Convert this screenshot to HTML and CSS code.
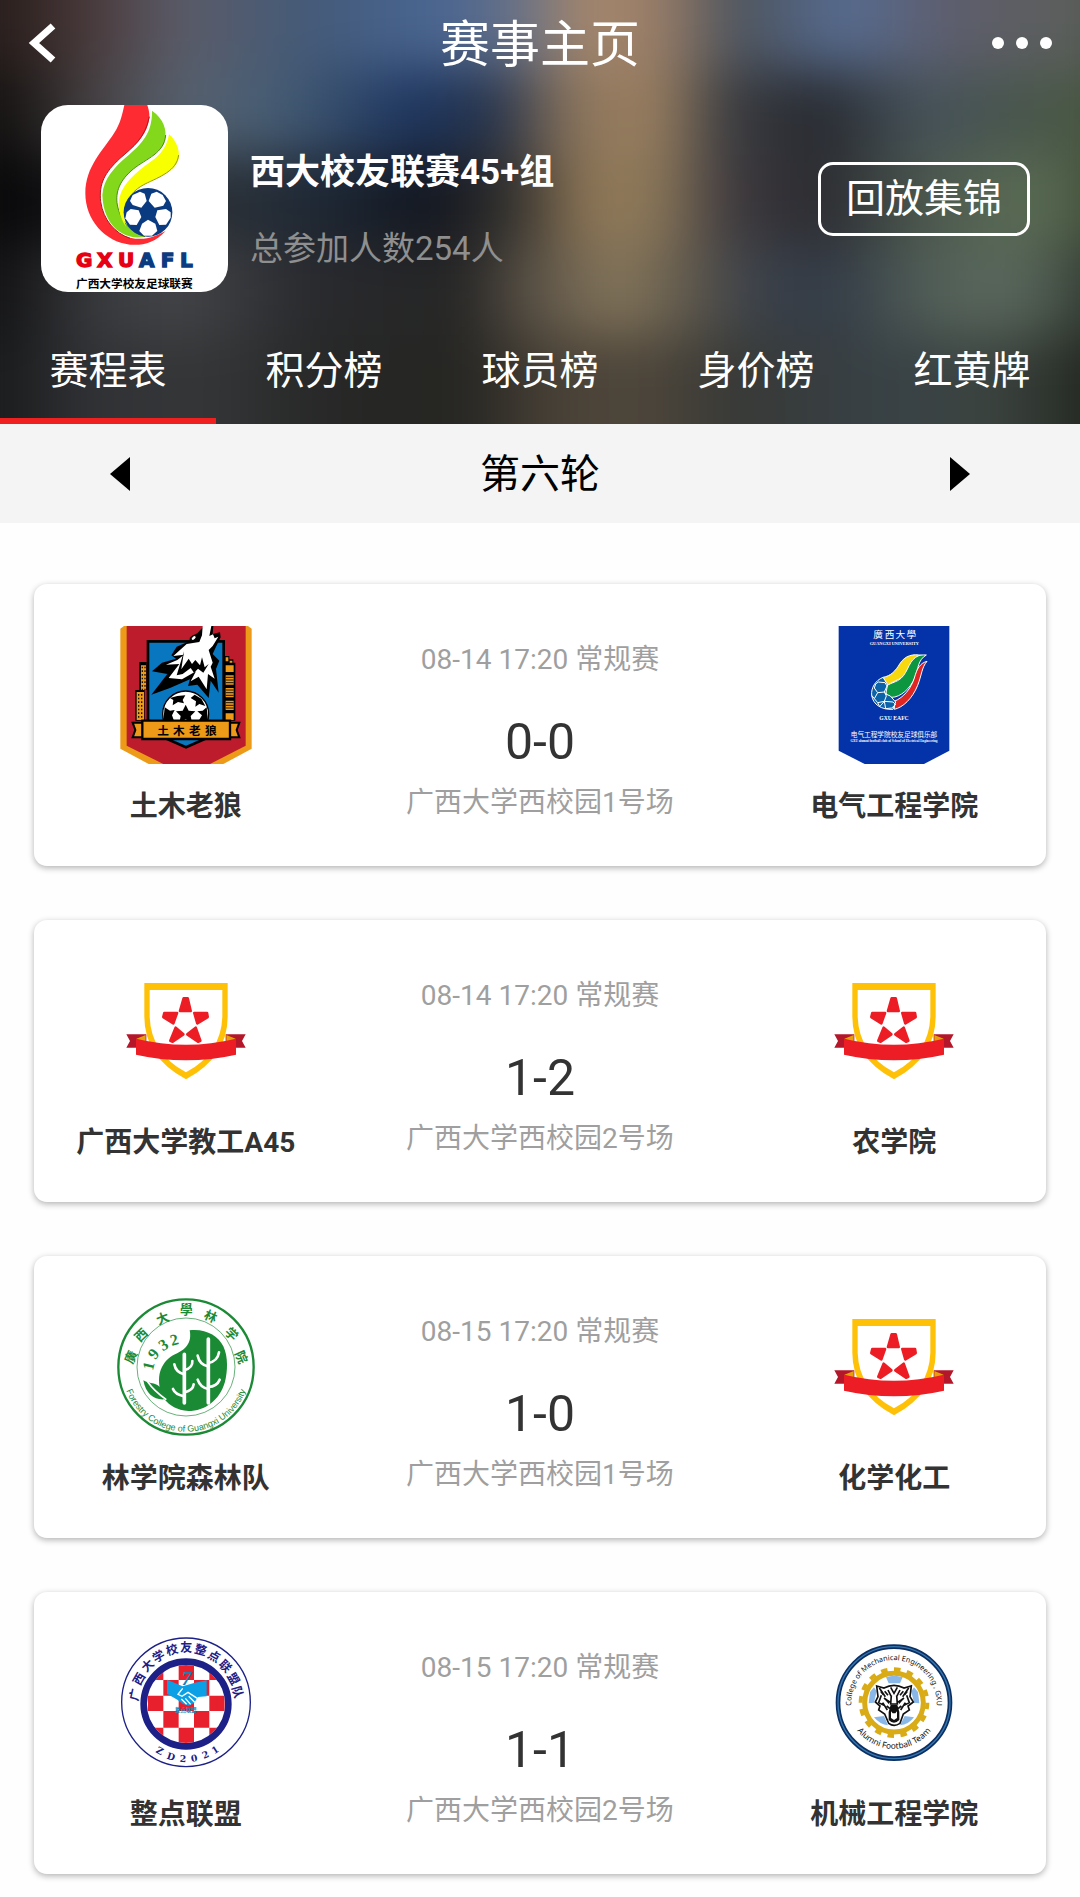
FILE: index.html
```html
<!DOCTYPE html>
<html lang="zh-CN">
<head>
<meta charset="utf-8">
<meta name="viewport" content="width=device-width, initial-scale=1">
<title>赛事主页</title>
<link rel="stylesheet" href="styles.css">
</head>
<body>
<svg class="defs" aria-hidden="true">
  <symbol id="default-crest" viewBox="24 6 414 414">
    <path fill="#b5172a" d="M52 223H112V263H52L63 243ZM410 223H350V263H410L399 243Z"/>
    <path fill="#ffc107" fill-rule="evenodd" d="M106 69H356V170Q356 290 231 358Q106 290 106 170ZM122 90V170Q126 280 231 337Q336 280 340 170V90Z"/>
    <path fill="#e3a008" d="M82 236L110 225V250ZM380 236L352 225V250Z"/>
    <path fill="#ec1d24" d="M81 236Q231 272 381 236V284Q231 318 81 284Z"/>
    <g fill="#ec1d24" stroke="#ec1d24" stroke-width="8" stroke-linejoin="round">
      <path d="M224 115H236L245 153H213Z"/>
      <path d="M256 159H294L296 171L265 190Z"/>
      <path d="M204 159H166L163 171L193 190Z"/>
      <path d="M260 203L274 242L267 245L235 223Z"/>
      <path d="M200 203L184 242L191 245L223 223Z"/>
    </g>
  </symbol>
</svg>

<header class="hero">
  <div class="hero-backdrop"></div>

  <div class="topbar">
    <button class="icon-button" type="button" aria-label="返回">
      <svg width="30" height="40" viewBox="0 0 30 40"><path d="M25 3L6 20L25 37" fill="none" stroke="#fff" stroke-width="7"/></svg>
    </button>
    <h1 class="page-title">赛事主页</h1>
    <button class="icon-button more" type="button" aria-label="更多">
      <svg width="60" height="12" viewBox="0 0 60 12" fill="#fff"><circle cx="6" cy="6" r="6"/><circle cx="30" cy="6" r="6"/><circle cx="54" cy="6" r="6"/></svg>
    </button>
  </div>

  <section class="event">
    <svg class="event-logo" viewBox="33 30 561 561" role="img" aria-label="GXUAFL">
      <rect x="33" y="30" width="561" height="561" fill="#fff"/>
      <path fill="#ff2b33" d="M283 30H352Q362 60 356 80C345 130 310 155 270 190C225 232 206 265 212 320C220 375 255 415 300 428C345 438 375 425 407 408C375 443 340 452 300 449C225 441 166 375 166 295C166 215 220 165 252 115C273 83 277 55 283 30Z"/>
      <path fill="none" stroke="#b3151d" stroke-width="3" d="M358 65C345 130 310 155 270 190C225 232 206 265 212 320C220 375 255 415 300 430"/>
      <path fill="#84d81c" d="M366 47C400 70 412 105 405 135C395 175 350 190 310 222C270 255 255 290 262 330C270 375 300 412 345 425C320 430 297 427 275 414C235 392 218 345 217 300C220 250 255 215 290 185C335 147 367 115 366 47Z"/>
      <path fill="none" stroke="#4b8c0c" stroke-width="3" d="M407 120C403 175 350 190 310 222C270 255 255 290 262 330C270 375 300 412 345 425"/>
      <path fill="#f7ff00" d="M417 118C442 140 451 170 445 195C435 228 390 245 345 267C310 285 290 310 284 345C282 365 283 380 288 395C268 365 262 335 269 305C280 265 320 230 360 202C395 178 412 150 417 118Z"/>
      <path fill="none" stroke="#999b00" stroke-width="3" d="M446 180C440 228 390 245 345 267C310 285 290 310 284 345"/>
      <circle cx="354" cy="352" r="73" fill="#0a3a80"/>
      <g fill="#fff">
        <path d="M308 300L330 290L344 296L350 318L334 338L308 330L300 318Z"/>
        <path d="M364 296L380 290L398 300L408 318L400 332L374 338L356 318Z"/>
        <path d="M290 352L302 342L326 346L334 366L320 390L300 389L286 370Z"/>
        <path d="M422 352L408 342L382 346L376 366L388 390L408 389L422 368Z"/>
        <path d="M336 386L354 374L376 386L382 408L366 422H342L328 408Z"/>
      </g>
      <g font-family="DejaVu Sans" font-weight="700" font-size="60" stroke-width="4" text-anchor="middle">
        <g fill="#e60012" stroke="#e60012"><text x="163" y="515">G</text><text x="224" y="515">X</text><text x="288" y="515">U</text></g>
        <g fill="#0a3a80" stroke="#0a3a80"><text x="350" y="515">A</text><text x="413" y="515">F</text><text x="469" y="515">L</text></g>
      </g>
      <text x="313" y="580" text-anchor="middle" font-family="Noto Sans CJK SC" font-weight="700" font-size="35">广西大学校友足球联赛</text>
    </svg>
    <div class="event-text">
      <h2 class="event-name">西大校友联赛45+组</h2>
      <p class="event-count">总参加人数254人</p>
    </div>
    <button class="replay" type="button">回放集锦</button>
  </section>

  <nav class="tabs">
    <a class="tab active" href="#schedule">赛程表</a>
    <a class="tab" href="#standings">积分榜</a>
    <a class="tab" href="#players">球员榜</a>
    <a class="tab" href="#values">身价榜</a>
    <a class="tab" href="#cards">红黄牌</a>
  </nav>
</header>

<section class="round">
  <button class="round-arrow" type="button" aria-label="上一轮"><svg width="20" height="34" viewBox="0 0 20 34"><path d="M20 0V34L0 17Z"/></svg></button>
  <h2 class="round-name">第六轮</h2>
  <button class="round-arrow" type="button" aria-label="下一轮"><svg width="20" height="34" viewBox="0 0 20 34"><path d="M0 0V34L20 17Z"/></svg></button>
</section>

<main class="matches" id="schedule">
  <article class="match">
    <div class="team">
      <svg class="crest" viewBox="21 36 414 414" role="img" aria-label="土木老狼">
        <path fill="#ec9a17" d="M31 44L42 36H414L425 44V404L340 450H116L31 404Z"/>
        <path fill="#bd1c2c" d="M50 36H407V395L300 450H160L50 395Z"/>
        <path d="M88 144H110V228H104V320H76V228H88ZM344 126H358V136H370V146H376V320H340V126Z"/>
        <path fill="#ec9a17" d="M93 154H108V228H93ZM80 234H102V318H80ZM347 130H355V142H347ZM359 140H367V146H359ZM347 154H371V174H347ZM347 184H371V212H347ZM347 222H371V250H347ZM347 260H371V288H347ZM347 298H371V318H347Z"/>
        <path fill="none" stroke="#1c1208" stroke-width="4" stroke-dasharray="5 6" d="M97 158V228M105 158V228M86 240V316M95 240V316"/>
        <path stroke="#1c1208" stroke-width="3" d="M347 190H371M347 198H371M347 206H371M347 228H371M347 236H371M347 244H371M347 266H371M347 274H371M347 282H371"/>
        <path fill="#0977bf" stroke="#000" stroke-width="8" d="M114 82H341V350L228 400L114 350Z"/>
        <path d="M238 82L240 70L262 58L282 36H310L308 60L330 55L332 70L318 98L308 120L328 140L318 165L326 236L302 200L296 252L262 212L234 216L240 196L180 222L124 242L172 180L126 172L156 146L198 134L184 124L200 98Z"/>
        <path fill="#fff" d="M278 36H304L298 66L309 61L314 73L325 68L308 96L296 108L308 146L302 158L314 194L294 180L290 226L266 188L242 202L258 172L216 196L176 192L208 150L168 152L202 138L222 122L190 126L230 90L268 84L276 64Z"/>
        <path d="M222 112L214 166L236 134L246 150L256 138L270 154L276 130L284 160L296 150L280 176L264 164L252 176L242 162L218 180L200 184Z"/>
        <ellipse cx="251" cy="72" rx="9" ry="6" fill="#fff" stroke="#000" stroke-width="4" transform="rotate(-40 251 72)"/>
        <circle cx="227" cy="300" r="69" stroke="#000" stroke-width="4" fill="#fff"/>
        <path d="M227 272L236 290L256 292L242 306L246 326L227 316L208 326L212 306L198 292L218 290ZM202 246L226 244L218 258L222 268L204 264L188 274L190 258L180 252ZM254 242L274 254L286 276L268 270L256 278L258 262L242 252ZM164 280L180 290L194 288L186 304L192 320H160ZM290 280L294 320H266L276 304L262 292L278 290Z"/>
        <path fill="#ec9a17" stroke="#000" stroke-width="6" d="M68 326H100V370H68L76 348ZM388 326H356V370H388L380 348Z"/>
        <path fill="#ec9a17" stroke="#000" stroke-width="7" d="M97 320H360V375H97Z"/>
        <text x="142" y="362" font-family="Noto Sans CJK SC" font-weight="700" font-size="35">土</text><text x="189" y="362" font-family="Noto Sans CJK SC" font-weight="700" font-size="35">木</text><text x="237" y="362" font-family="Noto Sans CJK SC" font-weight="700" font-size="35">老</text><text x="285" y="362" font-family="Noto Sans CJK SC" font-weight="700" font-size="35">狼</text>
      </svg>
      <p class="team-name">土木老狼</p>
    </div>
    <div class="info"><p class="meta">08-14 17:20 常规赛</p><p class="score">0-0</p><p class="meta venue">广西大学西校园1号场</p></div>
    <div class="team">
      <svg class="crest" viewBox="14 36 414 414" role="img" aria-label="电气工程学院">
        <path fill="#0433a9" d="M55 36H387V410L311 450H133L55 410Z"/>
        <g fill="#fff" text-anchor="middle">
          <g font-family="Noto Sans CJK SC" font-size="29"><text x="173" y="72">廣</text><text x="208" y="72">西</text><text x="240" y="72">大</text><text x="273" y="72">學</text></g>
          <text x="222" y="92" font-family="Liberation Serif" font-weight="700" font-size="13">GUANGXI UNIVERSITY</text>
          <text x="221" y="319" font-family="Liberation Serif" font-weight="700" font-size="17">GXU EAFC</text>
          <text x="221" y="368" font-family="Noto Sans CJK SC" font-size="20">电气工程学院校友足球俱乐部</text>
          <text x="221" y="384" font-family="Liberation Serif" font-weight="700" font-size="10">GXU alumni football club of School of Electrical Engineering</text>
        </g>
        <g stroke="#fff" stroke-width="3">
          <path fill="#f8d80e" d="M188 190C212 186 226 170 238 150C254 124 278 119 304 124C282 132 274 150 264 170C250 196 222 198 202 214Z"/>
          <path fill="#0d9640" d="M196 232C190 212 212 210 232 200C262 184 262 146 286 130C296 123 306 122 318 123C292 138 294 164 284 190C270 224 240 250 214 250C204 250 198 244 196 232Z"/>
          <path fill="#df2622" d="M222 262C250 250 272 224 282 192C290 164 298 148 320 142C304 160 304 184 292 214C276 254 248 280 222 286Z"/>
          <path fill="#0b62a8" d="M188 190C164 200 152 222 154 244C158 272 184 288 218 286L226 264L210 246L196 240L202 212Z"/>
          <path fill="none" d="M166 210L174 204L194 206L200 216L192 234L172 236L162 222ZM172 236L162 254L154 244M192 234L198 246L192 262L172 266L162 254M192 262L218 264M172 266L178 278L192 262M218 264L226 272L214 282L196 284L192 262"/>
        </g>
      </svg>
      <p class="team-name">电气工程学院</p>
    </div>
  </article>

  <article class="match">
    <div class="team"><svg class="crest" role="img" aria-label="广西大学教工A45"><use href="#default-crest"/></svg><p class="team-name">广西大学教工A45</p></div>
    <div class="info"><p class="meta">08-14 17:20 常规赛</p><p class="score">1-2</p><p class="meta venue">广西大学西校园2号场</p></div>
    <div class="team"><svg class="crest" role="img" aria-label="农学院"><use href="#default-crest"/></svg><p class="team-name">农学院</p></div>
  </article>

  <article class="match">
    <div class="team">
      <svg class="crest" viewBox="36 39 414 414" role="img" aria-label="林学院森林队">
        <defs><path id="forest-bottom" d="M53 276A192 192 0 0 0 433 276"/></defs>
        <circle cx="243" cy="246" r="203" fill="#fff" stroke="#1b8a35" stroke-width="7"/>
        <circle cx="243" cy="246" r="147" fill="none" stroke="#1b8a35" stroke-width="2"/>
        <path fill="#1b8a35" d="M254 136C300 130 340 152 355 184C370 216 368 260 360 290C345 345 300 378 250 378C215 376 195 362 178 343C150 346 122 328 115 286C138 300 168 290 168 322C152 270 170 228 210 208C240 195 262 175 254 136Z"/>
        <path fill="none" stroke="#fff" stroke-width="5" d="M128 290C145 315 162 328 184 344"/>
        <g fill="none" stroke="#fff" stroke-width="11" stroke-linecap="round">
          <path d="M238 208V354M310 162V354"/>
          <path stroke-width="8" d="M208 238Q212 262 238 268M262 228Q264 248 238 256M204 312Q210 328 238 334M266 298Q264 316 238 322M278 212Q284 240 310 244M342 202Q338 228 310 234M278 284Q286 308 310 312M344 284Q336 304 310 306"/>
        </g>
        <g fill="#1b8a35" text-anchor="middle">
          <g font-family="Liberation Serif" font-weight="700" font-size="48">
            <text transform="translate(146 246) rotate(-76)">1</text><text transform="translate(158 216) rotate(-52)">9</text><text transform="translate(184 193) rotate(-34)">3</text><text transform="translate(212 180) rotate(-15)">2</text>
          </g>
          <g font-family="Noto Sans CJK SC" font-weight="700" font-size="38">
            <text transform="translate(90 222) rotate(-66)">廣</text><text transform="translate(118 160) rotate(-44)">西</text><text transform="translate(178 113) rotate(-22)">大</text><text transform="translate(244 88)">學</text><text transform="translate(311 107) rotate(24)">林</text><text transform="translate(370 157) rotate(45)">学</text><text transform="translate(396 222) rotate(66)">院</text>
          </g>
          <text font-family="Liberation Sans" font-size="27"><textPath href="#forest-bottom" startOffset="50%">Forestry College of Guangxi University</textPath></text>
        </g>
      </svg>
      <p class="team-name">林学院森林队</p>
    </div>
    <div class="info"><p class="meta">08-15 17:20 常规赛</p><p class="score">1-0</p><p class="meta venue">广西大学西校园1号场</p></div>
    <div class="team"><svg class="crest" role="img" aria-label="化学化工"><use href="#default-crest"/></svg><p class="team-name">化学化工</p></div>
  </article>

  <article class="match">
    <div class="team">
      <svg class="crest" viewBox="21 27 414 414" role="img" aria-label="整点联盟">
        <defs>
          <clipPath id="zd-clip"><circle cx="228" cy="237" r="117"/></clipPath>
        </defs>
        <circle cx="228" cy="232" r="193" fill="#fff" stroke="#1c2087" stroke-width="4"/>
        <circle cx="228" cy="237" r="127" fill="#fff" stroke="#1c2087" stroke-width="20"/>
        <path clip-path="url(#zd-clip)" fill="#e8202e" d="M114 118H160V165H114ZM206 118H252V165H206ZM298 118H344V165H298ZM160 165H206V212H160ZM252 165H298V212H252ZM114 212H160V258H114ZM206 212H252V258H206ZM298 212H344V258H298ZM160 258H206V308H160ZM252 258H298V308H252ZM114 308H160V358H114ZM206 308H252V358H206ZM298 308H344V358H298Z"/>
        <path fill="#0ba0e6" d="M171 164L218 184L252 174L290 166V214L264 216L252 234L236 242L218 236L202 224L171 206Z"/>
        <path fill="none" stroke="#fff" stroke-width="4" d="M218 190L204 208L216 214L234 202L262 220M236 214L254 232M226 220L242 238M214 222L230 238"/>
        <text x="230" y="180" text-anchor="middle" font-family="Liberation Serif" font-style="italic" font-weight="700" font-size="58" fill="#187fbb">7</text>
        <text x="228" y="260" text-anchor="middle" font-family="Noto Sans CJK SC" font-weight="700" font-size="16" fill="#1687bd">整点联盟</text>
        <g fill="#1c2087" text-anchor="middle" font-family="Noto Sans CJK SC" font-weight="700" font-size="36">
          <text transform="translate(87 212) rotate(-77)">广</text><text transform="translate(98 168) rotate(-60)">西</text><text transform="translate(122 131) rotate(-44)">大</text><text transform="translate(152 105) rotate(-30)">学</text><text transform="translate(189 87) rotate(-15)">校</text><text transform="translate(229 80)">友</text><text transform="translate(269 87) rotate(15)">整</text><text transform="translate(306 105) rotate(30)">点</text><text transform="translate(337 133) rotate(45)">联</text><text transform="translate(359 168) rotate(60)">盟</text><text transform="translate(370 205) rotate(74)">队</text>
        </g>
        <g fill="#1c2087" text-anchor="middle" font-family="DejaVu Serif" font-weight="700" font-size="28">
          <text transform="translate(145 386) rotate(29)">Z</text><text transform="translate(180 404) rotate(17)">D</text><text transform="translate(218 411) rotate(4)">2</text><text transform="translate(254 409) rotate(-10)">0</text><text transform="translate(290 398) rotate(-23)">2</text><text transform="translate(321 383) rotate(-34)">1</text>
        </g>
      </svg>
      <p class="team-name">整点联盟</p>
    </div>
    <div class="info"><p class="meta">08-15 17:20 常规赛</p><p class="score">1-1</p><p class="meta venue">广西大学西校园2号场</p></div>
    <div class="team">
      <svg class="crest" viewBox="15 12 414 414" role="img" aria-label="机械工程学院">
        <defs>
          <path id="mech-top" d="M98 250A128 128 0 1 1 346 250"/>
          <path id="mech-bottom" d="M84 240A140 140 0 0 0 360 240"/>
        </defs>
        <circle cx="222" cy="218" r="168" fill="#fff" stroke="#0b2f63" stroke-width="14"/>
        <circle cx="222" cy="218" r="168" fill="none" stroke="#3777ae" stroke-width="4"/>
        <circle cx="222" cy="218" r="100" fill="none" stroke="#d9ab16" stroke-width="12" pathLength="320" stroke-dasharray="10 10"/>
        <circle cx="222" cy="218" r="88" fill="#fff" stroke="#d9ab16" stroke-width="15"/>
        <path fill="#89b8e8" d="M198 142Q222 132 248 142L240 160H206ZM150 186L162 172L170 184L162 218L146 220ZM294 186L282 172L274 184L282 218L298 220ZM162 262L192 258L204 286Q180 284 162 262ZM282 262L254 258L240 286Q266 284 282 262Z"/>
        <path fill="#fff" stroke="#111" stroke-width="5" d="M170 168L192 174Q222 158 252 174L274 168L270 200L280 216L264 228L268 240L250 252L240 280Q222 292 206 280L194 252L176 240L180 228L166 216L174 200Z"/>
        <path fill="none" stroke="#111" stroke-width="5" d="M178 174L196 200M266 174L248 200M212 172L222 190L232 172M204 180L214 200M240 180L230 200M184 196L176 218L192 226M260 196L268 218L252 226M192 204L208 216M252 204L236 216M188 218L202 240M256 218L242 240M214 196L212 222H232L230 196M200 228L210 236M244 228L234 236M194 184L204 196M250 184L240 196M182 184L190 194M262 184L254 194"/>
        <path fill="#111" d="M194 208L212 214L206 222ZM250 208L232 214L238 222ZM212 224H232L238 246V270Q222 286 206 270V246Z"/>
        <path fill="#fff" d="M213 244L218 250H226L231 244V264L222 270L213 264Z"/>
        <g font-family="Noto Sans" font-size="22" fill="#111" text-anchor="middle">
          <text><textPath href="#mech-top" startOffset="50%">College of Mechanical Engineering , GXU</textPath></text>
          <text font-size="25"><textPath href="#mech-bottom" startOffset="50%">Alumni Football Team</textPath></text>
        </g>
      </svg>
      <p class="team-name">机械工程学院</p>
    </div>
  </article>
</main>
</body>
</html>
```

FILE: styles.css
```css
* {
  box-sizing: border-box;
}

body {
  margin: 0;
  background: #fefefe;
  color: #333;
  font-family: Roboto, "Noto Sans CJK SC", sans-serif;
}

h1,
h2,
p {
  margin: 0;
  font-weight: 400;
}

button {
  padding: 0;
  border: 0;
  background: none;
  color: inherit;
  font: inherit;
}

svg {
  display: block;
}

.defs {
  position: absolute;
  width: 0;
  height: 0;
}

/* Header */

.hero {
  position: relative;
  overflow: hidden;
  isolation: isolate;
  background: #2b2c2e;
  color: #fff;
}

/* Five colour bands, blurred into one another */
.hero-backdrop {
  position: absolute;
  inset: -80px -40px;
  z-index: -1;
  background-image:
    linear-gradient(90deg, #231917 0%, #2e2321 5%, #49393a 11%, #5b5c68 19%, #445a78 30%, #486592 41%, #667086 48%, #a6876b 54%, #9a7e68 60%, #4c535c 67%, #566b90 76%, #5e5d6b 86%, #5a5f55 100%),
    linear-gradient(90deg, #0e0c0c 0%, #1a1716 5%, #443f40 11%, #57616e 19%, #465d74 27%, #1d355f 39%, #26334a 46%, #8c755c 53%, #9a7f60 60%, #3b3d42 66%, #272a30 74%, #46525a 83%, #4b5a3f 100%),
    linear-gradient(90deg, #050506 0%, #0a0a0c 5%, #151517 11%, #2b3138 22%, #1d2734 31%, #12161f 41%, #35332f 48%, #8f7757 54%, #8c7859 60%, #403c40 66%, #2a2a30 74%, #4b574d 83%, #5b6d55 92%, #414e38 100%),
    linear-gradient(90deg, #0e0e10 0%, #18181a 5%, #38393c 11%, #444548 19%, #292a2e 30%, #252525 43%, #60574a 50%, #85765b 57%, #5e574b 63%, #3c424a 68%, #333b47 75%, #536058 84%, #5a685d 91%, #2a3129 100%),
    linear-gradient(90deg, #161819 0%, #1d1f21 5%, #303235 11%, #343638 21%, #272827 31%, #252522 43%, #4b4338 52%, #4e463b 59%, #373936 67%, #384146 79%, #3c4440 89%, #1d2119 100%);
  background-position: 0 0, 0 150px, 0 235px, 0 325px, 0 415px;
  background-size: 100% 150px, 100% 85px, 100% 90px, 100% 90px, 100% 180px;
  background-repeat: no-repeat;
  filter: blur(26px);
}

.topbar {
  display: grid;
  grid-template-columns: 1fr auto 1fr;
  align-items: center;
  height: 86px;
  padding: 0 28px;
}

.icon-button {
  justify-self: start;
}

.more {
  justify-self: end;
}

.page-title {
  padding-top: 4px;
  font-size: 50px;
  line-height: 60px;
}

.event {
  display: flex;
  align-items: center;
  padding: 19px 50px 0 41px;
}

.event-logo {
  flex: none;
  width: 187px;
  height: 187px;
  border-radius: 27px;
}

.event-text {
  flex: 1;
  margin-left: 22px;
  padding-top: 24px;
}

.event-name {
  font-size: 35px;
  font-weight: 700;
  line-height: 44px;
}

.event-count {
  margin-top: 32px;
  color: #8f8f8f;
  font-size: 33px;
  line-height: 44px;
}

.replay {
  padding: 10px 25px;
  border: 3px solid #fff;
  border-radius: 15px;
  font-size: 39px;
  line-height: 48px;
}

.tabs {
  display: grid;
  grid-template-columns: repeat(5, 1fr);
  margin-top: 26px;
}

.tab {
  padding: 28px 0 22px;
  border-bottom: 6px solid transparent;
  color: #fff;
  font-size: 39px;
  line-height: 50px;
  text-align: center;
  text-decoration: none;
}

.tab.active {
  border-bottom-color: #f02020;
}

/* Round picker */

.round {
  display: flex;
  align-items: center;
  justify-content: space-between;
  height: 99px;
  padding: 0 110px;
  background: #f4f4f4;
  color: #000;
}

.round-name {
  padding-top: 2px;
  font-size: 40px;
  line-height: 50px;
}

/* Match list */

.matches {
  display: grid;
  gap: 54px;
  padding: 61px 34px 23px;
}

.match {
  display: grid;
  grid-template-columns: 3fr 4fr 3fr;
  padding: 42px 0 39px;
  border-radius: 13px;
  background: #fff;
  box-shadow: 0 2px 6px rgba(0, 0, 0, 0.3);
  text-align: center;
}

.team {
  display: flex;
  flex-direction: column;
  align-items: center;
  gap: 23px;
}

.crest {
  width: 138px;
  height: 138px;
}

.team-name {
  font-size: 28px;
  font-weight: 700;
  line-height: 40px;
}

.info {
  padding-top: 14px;
}

.meta {
  color: #9f9f9f;
  font-size: 28px;
  line-height: 40px;
}

.score {
  margin-top: 32px;
  font-size: 50px;
  line-height: 60px;
}

.venue {
  margin-top: 11px;
}
```
